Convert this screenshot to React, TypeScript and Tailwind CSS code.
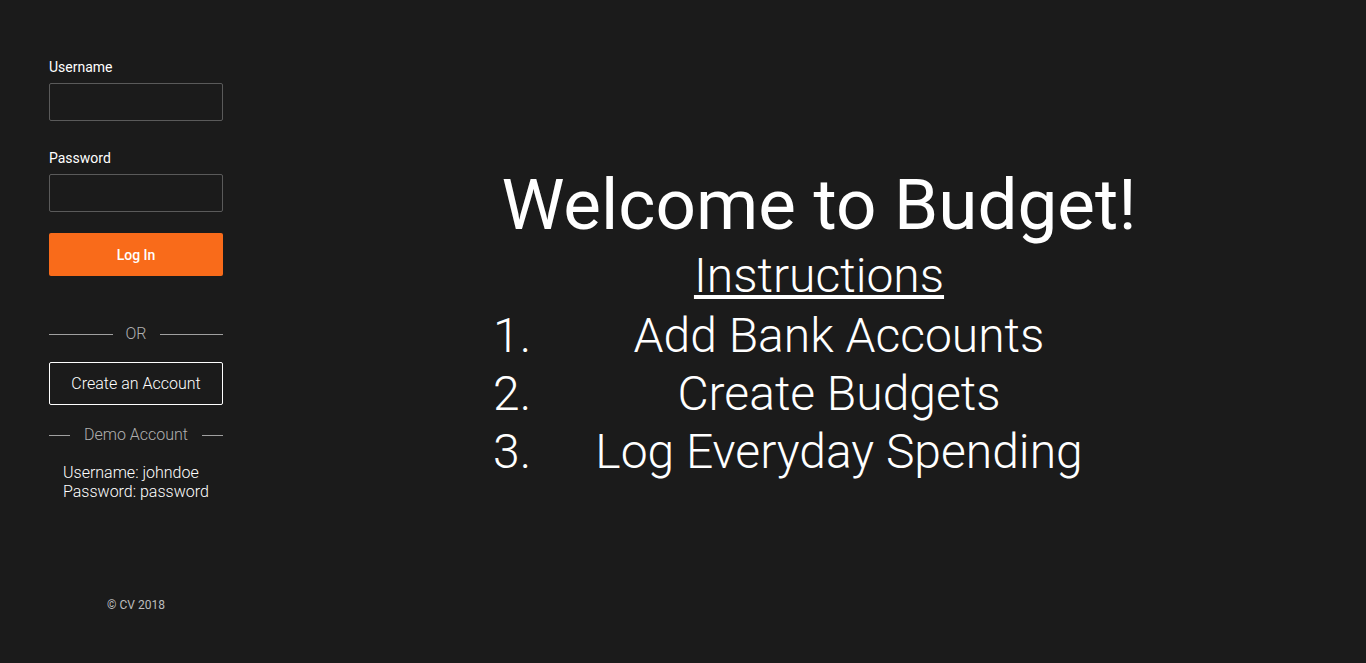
import React from "react";

const font = { fontFamily: "Roboto, 'Liberation Sans', sans-serif" };

function Divider({ label, gap }: { label: string; gap: string }) {
  return (
    <div className="flex items-center h-6">
      <div className="flex-1 h-px bg-[#a0a0a0]" />
      <span className={`${gap} text-base text-[#b0b0b0] font-light`}>{label}</span>
      <div className="flex-1 h-px bg-[#a0a0a0]" />
    </div>
  );
}

export default function App() {
  const steps = ["Add Bank Accounts", "Create Budgets", "Log Everyday Spending"];

  return (
    <div className="h-screen w-full flex bg-[#1b1b1b] text-white overflow-hidden" style={font}>
      {/* Sidebar login */}
      <aside className="w-[272px] flex-shrink-0 flex flex-col px-[49px] pt-[57px]">
        <label className="text-sm leading-5 text-white mb-[6px]">Username</label>
        <input className="h-[38px] w-full bg-transparent border border-[#5a5a5a] rounded-[2px] px-2 text-white outline-none" />

        <label className="text-sm leading-5 text-white mt-[27px] mb-[6px]">Password</label>
        <input
          type="password"
          className="h-[38px] w-full bg-transparent border border-[#5a5a5a] rounded-[2px] px-2 text-white outline-none"
        />

        <button className="mt-[21px] h-[43px] w-full bg-[#f96b1a] rounded-[2px] text-sm font-medium text-white">
          Log In
        </button>

        <div className="mt-[46px]">
          <Divider label="OR" gap="px-[13px]" />
        </div>

        <button className="mt-[16px] h-[43px] w-full border border-white rounded-[2px] text-base font-light text-white">
          Create an Account
        </button>

        <div className="mt-[18px]">
          <Divider label="Demo Account" gap="px-[14px]" />
        </div>

        <div className="mt-[16px] pl-[14px] text-base leading-[19px] font-light text-white">
          <div>Username: johndoe</div>
          <div>Password: password</div>
        </div>

        <div className="flex-1" />
        <footer className="mb-[50px] text-center text-xs leading-4 text-[#bdbdbd]">© CV 2018</footer>
      </aside>

      {/* Main welcome */}
      <main className="flex-1 flex flex-col items-center pt-[163px]">
        <h1 className="text-[71px] leading-[84px] font-normal">Welcome to Budget!</h1>
        <h2 className="text-[48px] leading-[58px] font-light underline">Instructions</h2>
        <ol className="mt-[2px] w-[652px]">
          {steps.map((s, i) => (
            <li key={s} className="flex text-[48px] leading-[58px] font-light">
              <span className="w-[40px]">{i + 1}.</span>
              <span className="flex-1 text-center">{s}</span>
            </li>
          ))}
        </ol>
      </main>
    </div>
  );
}
